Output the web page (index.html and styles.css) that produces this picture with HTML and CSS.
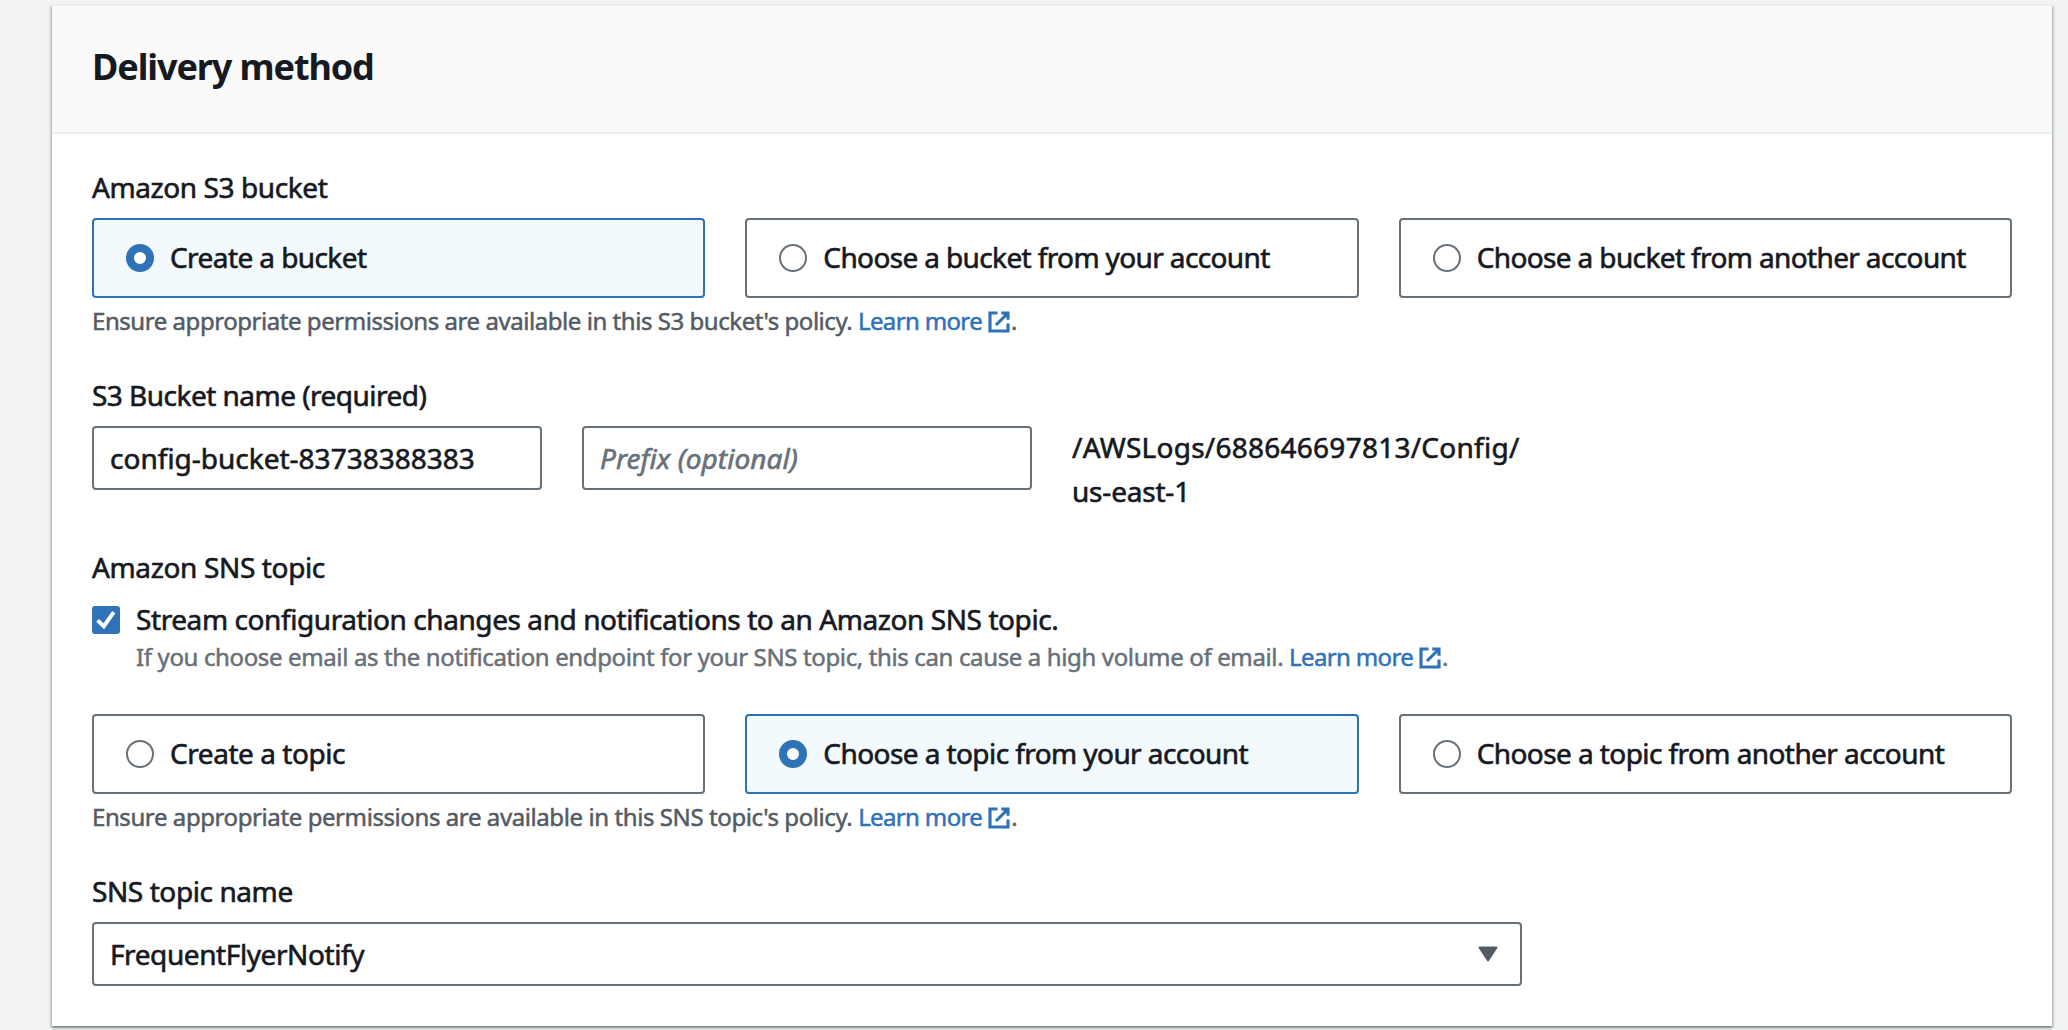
FILE: index.html
```
<!DOCTYPE html>
<html lang="en">
<head>
<meta charset="utf-8">
<title>Delivery method</title>
<link rel="stylesheet" href="styles.css">
</head>
<body>
<svg class="sprite" aria-hidden="true">
  <symbol id="external" viewBox="0 0 16 16">
    <path d="M9.5 2H14v4.5M6 10l8-8M14 9.05V14H2V2h5" fill="none" stroke="currentColor" stroke-width="2.1"/>
  </symbol>
</svg>
<main class="card">
  <header class="card-header"><h2 class="title">Delivery method</h2></header>
  <div class="card-body">
    <section class="field">
      <div class="label ls-40">Amazon S3 bucket</div>
      <div class="tiles">
        <label class="tile selected"><span class="radio"></span><span class="tile-text ls-58">Create a bucket</span></label>
        <label class="tile"><span class="radio"></span><span class="tile-text ls-62">Choose a bucket from your account</span></label>
        <label class="tile"><span class="radio"></span><span class="tile-text ls-62">Choose a bucket from another account</span></label>
      </div>
      <p class="help ls-45">Ensure appropriate permissions are available in this S3 bucket's policy. <a class="link">Learn more<svg class="ext"><use href="#external"/></svg></a>.</p>
    </section>

    <section class="field">
      <div class="label ls-52">S3 Bucket name (required)</div>
      <div class="bucket-row">
        <div class="input"><span>config-bucket-83738388383</span></div>
        <div class="input placeholder"><span>Prefix (optional)</span></div>
        <div class="path">/AWSLogs/688646697813/Config/<br><span class="region">us-east-1</span></div>
      </div>
    </section>

    <section class="field sns">
      <div class="label ls-35">Amazon SNS topic</div>
      <div class="check-row">
        <svg class="checkbox" viewBox="0 0 28 28"><rect width="28" height="28" rx="3"/><path d="M5.6 14.4l6.2 5.8L21.8 6.2"/></svg>
        <div class="check-content">
          <div class="check-text">Stream configuration changes and notifications to an Amazon SNS topic.</div>
          <p class="check-help">If you choose email as the notification endpoint for your SNS topic, this can cause a high volume of email. <a class="link">Learn more<svg class="ext"><use href="#external"/></svg></a>.</p>
        </div>
      </div>
      <div class="tiles">
        <label class="tile"><span class="radio"></span><span class="tile-text ls-45">Create a topic</span></label>
        <label class="tile selected"><span class="radio"></span><span class="tile-text ls-58">Choose a topic from your account</span></label>
        <label class="tile"><span class="radio"></span><span class="tile-text ls-58">Choose a topic from another account</span></label>
      </div>
      <p class="help ls-40">Ensure appropriate permissions are available in this SNS topic's policy. <a class="link">Learn more<svg class="ext"><use href="#external"/></svg></a>.</p>
    </section>

    <section class="field">
      <div class="label ls-40">SNS topic name</div>
      <div class="input select"><span class="ls-40">FrequentFlyerNotify</span>
        <svg class="caret" viewBox="0 0 20 16"><path d="M1.5 1.5h17L10 14.5z"/></svg>
      </div>
    </section>
  </div>
</main>
</body>
</html>
```
FILE: styles.css
```
* { box-sizing: border-box; }
body {
  margin: 0;
  height: 1030px;
  padding: 4px 16px 0 52px;
  overflow: hidden;
  background: #f2f3f3;
  color: #16191f;
  font: 28px/44px "Noto Sans", "Open Sans", sans-serif;
  -webkit-text-stroke: 0.6px currentColor;
}
h2, p { margin: 0; }
.sprite { position: absolute; width: 0; height: 0; }

.card {
  height: 1022px;
  background: #fff;
  border-top: 2px solid #eaeded;
  box-shadow: 0 2px 2px 0 rgba(0, 28, 36, .3), 2px 2px 2px 0 rgba(0, 28, 36, .15), -2px 2px 2px 0 rgba(0, 28, 36, .15);
}
.card-header {
  height: 128px;
  padding: 39px 40px 0;
  background: #fafafa;
  border-bottom: 2px solid #eaeded;
}
.title { font-size: 36px; line-height: 44px; font-weight: 700; letter-spacing: -1.1px; -webkit-text-stroke: 0; }
.card-body { padding: 31px 40px 40px; }

.field { margin-bottom: 34px; }
.sns { margin-top: -3px; }
.label { margin-bottom: 9px; }

.tiles { display: grid; grid-template-columns: repeat(3, 1fr); gap: 40px; }
.tile {
  display: flex;
  align-items: center;
  gap: 16px;
  height: 80px;
  padding: 0 32px;
  border: 2px solid #687078;
  border-radius: 4px;
  white-space: nowrap;
}
.tile.selected { border-color: #2e73b8; background: #f2fafd; }
.tile-text { padding-bottom: 2px; }
.radio { flex: none; width: 28px; height: 28px; border: 2px solid #687078; border-radius: 50%; background: #fff; }
.selected .radio { border: 8px solid #3072b8; }

.help, .check-help { font-size: 24px; line-height: 36px; white-space: nowrap; -webkit-text-stroke-width: .5px; }
.help { margin-top: 5px; color: #545b64; }
.link { color: #2e73b8; letter-spacing: -.65px; }
.ext { width: 24px; height: 24px; margin-left: 5px; vertical-align: -4px; }

.bucket-row { display: flex; gap: 40px; height: 88px; }
.input {
  display: flex;
  align-items: center;
  width: 450px;
  height: 64px;
  padding: 0 16px;
  border: 2px solid #687078;
  border-radius: 4px;
}
.placeholder { color: #687078; font-style: italic; letter-spacing: .04px; }
.path { margin-top: -1px; letter-spacing: .25px; }
.region { letter-spacing: -.2px; }

.sns .label { margin-bottom: 8px; }
.check-row { display: flex; gap: 16px; margin-bottom: 39px; }
.checkbox { flex: none; width: 28px; height: 28px; margin-top: 9px; }
.checkbox rect { fill: #3072b8; }
.checkbox path { fill: none; stroke: #fff; stroke-width: 4; }
.check-text { letter-spacing: -.42px; }
.check-help { margin-top: -2px; color: #687078; letter-spacing: -.365px; }

.select { justify-content: space-between; width: 1430px; padding-right: 22px; }
.select span { padding-bottom: 1px; }
.caret { width: 20px; height: 16px; }
.caret path { fill: #545b64; stroke: #545b64; stroke-width: 2; stroke-linejoin: round; }

/* Tracking steps */
.ls-35 { letter-spacing: -.36px; }
.ls-40 { letter-spacing: -.41px; }
.ls-45 { letter-spacing: -.45px; }
.ls-52 { letter-spacing: -.52px; }
.ls-58 { letter-spacing: -.58px; }
.ls-62 { letter-spacing: -.63px; }
```
